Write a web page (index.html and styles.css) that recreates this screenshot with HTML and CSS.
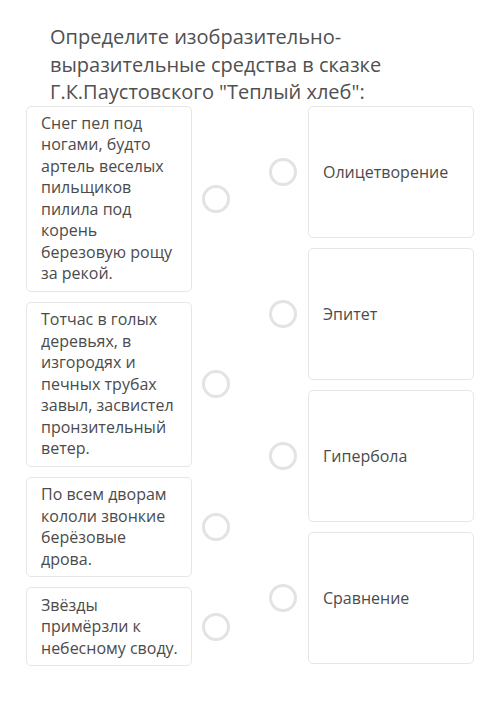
FILE: index.html
```html
<!DOCTYPE html>
<html lang="ru">
<head>
    <meta charset="UTF-8">
    <meta name="viewport" content="width=device-width, initial-scale=1.0">
    <title>Сопоставление</title>
    <link rel="stylesheet" href="styles.css">
</head>
<body>
    <h1 class="question">Определите изобразительно-выразительные средства в сказке Г.К.Паустовского "Теплый хлеб":</h1>

    <div class="match">
        <!-- Left column -->
        <div class="column">
            <div class="item">
                <div class="card left">Снег пел под ногами, будто артель веселых пильщиков пилила под корень березовую рощу за рекой.</div>
                <span class="dot"></span>
            </div>
            <div class="item">
                <div class="card left">Тотчас в голых деревьях, в изгородях и печных трубах завыл, засвистел пронзительный ветер.</div>
                <span class="dot"></span>
            </div>
            <div class="item">
                <div class="card left">По всем дворам кололи звонкие берёзовые дрова.</div>
                <span class="dot"></span>
            </div>
            <div class="item">
                <div class="card left">Звёзды примёрзли к небесному своду.</div>
                <span class="dot"></span>
            </div>
        </div>

        <!-- Right column -->
        <div class="column right-col">
            <div class="item">
                <span class="dot"></span>
                <div class="card right">Олицетворение</div>
            </div>
            <div class="item">
                <span class="dot"></span>
                <div class="card right">Эпитет</div>
            </div>
            <div class="item">
                <span class="dot"></span>
                <div class="card right">Гипербола</div>
            </div>
            <div class="item">
                <span class="dot"></span>
                <div class="card right">Сравнение</div>
            </div>
        </div>
    </div>
</body>
</html>
```

FILE: styles.css
```css
body {
    margin: 0;
    font-family: 'Open Sans', 'Noto Sans', sans-serif;
    background: #fff;
    color: #4b4b4b;
}

.question {
    margin: 0;
    padding: 23px 50px 0 50px;
    font-size: 20px;
    font-weight: normal;
    line-height: 27.5px;
    color: #505050;
}

.match {
    display: flex;
    justify-content: space-between;
    padding: 0 26px;
}

.column {
    display: flex;
    flex-direction: column;
    gap: 10.3px;
}

.item {
    display: flex;
    align-items: center;
}

.left + .dot {
    margin-left: 10px;
}

.right-col .dot {
    margin-right: 11px;
}

.card {
    box-sizing: border-box;
    width: 166px;
    border: 1px solid #e6e6e6;
    border-radius: 5px;
    font-size: 16px;
    background: #fff;
}

.card.left {
    padding: 6.1px 13px 6.1px 14px;
    line-height: 21.5px;
}

.card.right {
    height: 132px;
    display: flex;
    align-items: center;
    padding: 0 12px 0 14px;
}

.dot {
    box-sizing: border-box;
    width: 28px;
    height: 28px;
    border: 3px solid #e3e3e3;
    border-radius: 50%;
    flex-shrink: 0;
}
```
